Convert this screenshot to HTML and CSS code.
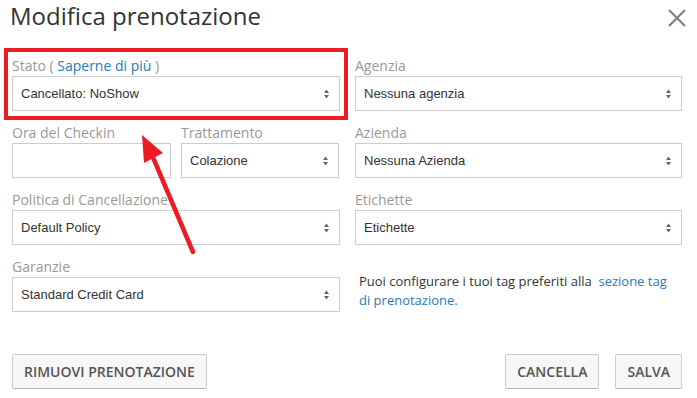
FILE: index.html
```html
<!DOCTYPE html>
<html lang="it">
<head>
<meta charset="utf-8">
<title>Modifica prenotazione</title>
<link rel="stylesheet" href="styles.css">
</head>
<body>
<div class="modal">
  <div class="header">
    <h1 class="title">Modifica prenotazione</h1>
    <svg class="close" width="20" height="20" viewBox="0 0 20 20"><path d="M2 2 L18 18 M18 2 L2 18" stroke="#808080" stroke-width="2.2" fill="none"/></svg>
  </div>
  <div class="form">
    <div class="field">
      <div class="label">Stato ( <a class="link">Saperne di più</a> )</div>
      <div class="select"><span>Cancellato: NoShow</span><svg class="arr" width="7" height="12" viewBox="0 0 7 12"><path d="M3.5 1.5 L6 5 L1 5 Z M3.5 10.5 L6 7 L1 7 Z" fill="#666"/></svg></div>
    </div>
    <div class="field">
      <div class="label">Agenzia</div>
      <div class="select"><span>Nessuna agenzia</span><svg class="arr" width="7" height="12" viewBox="0 0 7 12"><path d="M3.5 1.5 L6 5 L1 5 Z M3.5 10.5 L6 7 L1 7 Z" fill="#666"/></svg></div>
    </div>
    <div class="split">
      <div class="field">
        <div class="label">Ora del Checkin</div>
        <div class="select"></div>
      </div>
      <div class="field">
        <div class="label">Trattamento</div>
        <div class="select"><span>Colazione</span><svg class="arr" width="7" height="12" viewBox="0 0 7 12"><path d="M3.5 1.5 L6 5 L1 5 Z M3.5 10.5 L6 7 L1 7 Z" fill="#666"/></svg></div>
      </div>
    </div>
    <div class="field">
      <div class="label">Azienda</div>
      <div class="select"><span>Nessuna Azienda</span><svg class="arr" width="7" height="12" viewBox="0 0 7 12"><path d="M3.5 1.5 L6 5 L1 5 Z M3.5 10.5 L6 7 L1 7 Z" fill="#666"/></svg></div>
    </div>
    <div class="field">
      <div class="label">Politica di Cancellazione</div>
      <div class="select"><span>Default Policy</span><svg class="arr" width="7" height="12" viewBox="0 0 7 12"><path d="M3.5 1.5 L6 5 L1 5 Z M3.5 10.5 L6 7 L1 7 Z" fill="#666"/></svg></div>
    </div>
    <div class="field">
      <div class="label">Etichette</div>
      <div class="select"><span>Etichette</span><svg class="arr" width="7" height="12" viewBox="0 0 7 12"><path d="M3.5 1.5 L6 5 L1 5 Z M3.5 10.5 L6 7 L1 7 Z" fill="#666"/></svg></div>
    </div>
    <div class="field">
      <div class="label">Garanzie</div>
      <div class="select"><span>Standard Credit Card</span><svg class="arr" width="7" height="12" viewBox="0 0 7 12"><path d="M3.5 1.5 L6 5 L1 5 Z M3.5 10.5 L6 7 L1 7 Z" fill="#666"/></svg></div>
    </div>
    <p class="note"><span>Puoi configurare i tuoi tag preferiti alla</span>&nbsp;&nbsp;<a class="link"><span>sezione tag</span> <span>di prenotazione.</span></a></p>
  </div>
  <div class="footer">
    <button class="btn">RIMUOVI PRENOTAZIONE</button>
    <div class="right">
      <button class="btn">CANCELLA</button>
      <button class="btn">SALVA</button>
    </div>
  </div>
  <div class="redbox"></div>
  <svg class="arrow" width="697" height="398" viewBox="0 0 697 398">
    <line x1="193" y1="252" x2="152" y2="155" stroke="#ec1c24" stroke-width="4.5" stroke-linecap="round"/>
    <path d="M142 135 L163 153 L144 163 Z" fill="#ec1c24"/>
  </svg>
</div>
</body>
</html>
```
FILE: styles.css
```css
html, body {
  margin: 0;
  padding: 0;
  background: #fff;
}
body {
  font-family: "Open Sans", sans-serif;
  color: #333;
  width: 697px;
  height: 398px;
  overflow: hidden;
}
.modal {
  position: relative;
  padding: 0 15px 0 12px;
}
.header {
  height: 56px;
  display: flex;
  justify-content: space-between;
  align-items: flex-start;
}
.title {
  margin: 0 0 0 -2px;
  font-size: 24px;
  font-weight: 400;
  line-height: 32px;
  color: #333;
}
.close {
  margin-top: 8px;
  margin-right: -5px;
}
.form {
  display: grid;
  grid-template-columns: 328px 327px;
  column-gap: 15px;
  row-gap: 12px;
}
.split {
  display: grid;
  grid-template-columns: 159px 158px;
  column-gap: 10px;
}
.field {
  display: flex;
  flex-direction: column;
}
.label {
  font-size: 14px;
  line-height: 20px;
  height: 20px;
  color: #999;
}
.link {
  color: #2a7ab8;
  text-decoration: none;
}
.select {
  box-sizing: border-box;
  height: 35px;
  border: 1px solid #ccc;
  display: flex;
  align-items: center;
  justify-content: space-between;
  padding: 0 9px 0 8px;
  font-family: "Liberation Sans", Arial, sans-serif;
  font-size: 13px;
  color: #333;
  background: #fff;
}
.arr {
  display: block;
}
.note {
  margin: 0;
  font-size: 13px;
  line-height: 19px;
  color: #333;
  padding: 15px 6px 0 4px;
}
.footer {
  display: flex;
  justify-content: space-between;
  margin-top: 42px;
}
.right {
  display: flex;
  gap: 16px;
}
.btn {
  box-sizing: border-box;
  height: 35px;
  padding: 0 11px;
  border: 1px solid #ccc;
  border-bottom-color: #b3b3b3;
  background: #f7f7f7;
  border-radius: 2px;
  font-family: "Open Sans", sans-serif;
  font-weight: 600;
  font-size: 14px;
  color: #555;
}
.redbox {
  position: absolute;
  left: 4px;
  top: 48px;
  width: 344px;
  height: 72px;
  box-sizing: border-box;
  border: 4px solid #ec1c24;
}
.arrow {
  position: absolute;
  left: 0;
  top: 0;
}
```
